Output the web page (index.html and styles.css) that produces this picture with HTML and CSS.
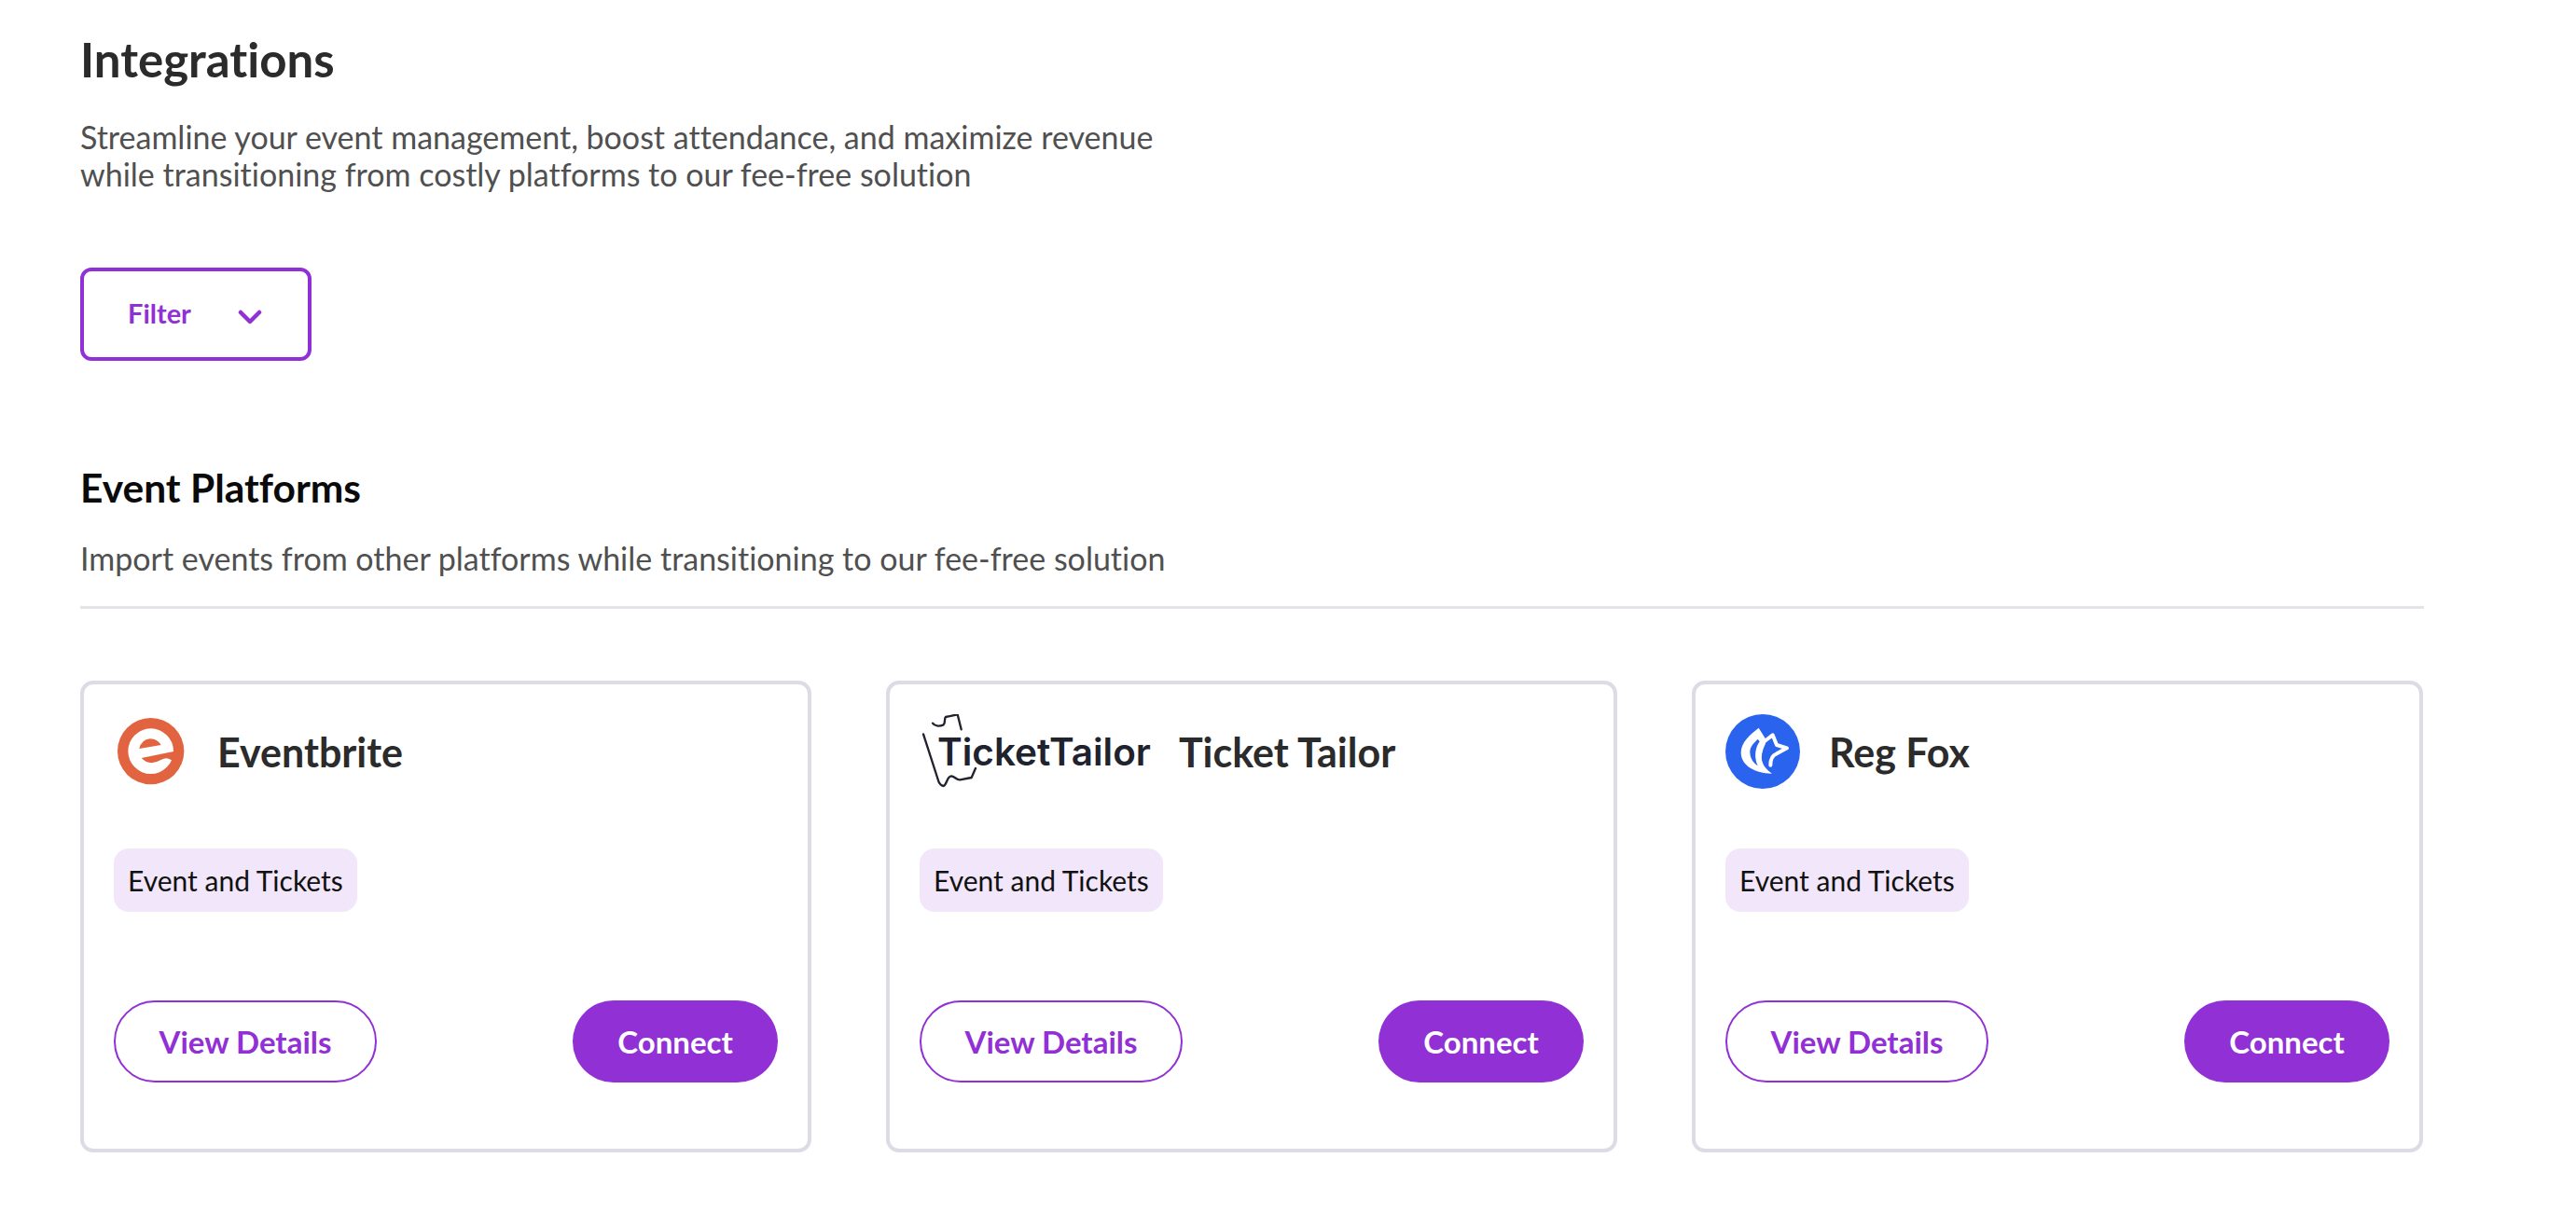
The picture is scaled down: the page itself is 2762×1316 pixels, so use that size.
FILE: index.html
```html
<!DOCTYPE html>
<html lang="en">
<head>
    <meta charset="UTF-8">
    <title>Integrations</title>
    <link rel="stylesheet" href="styles.css">
</head>
<body>
    <h1>Integrations</h1>
    <p class="intro">Streamline your event management, boost attendance, and maximize revenue<br>while transitioning from costly platforms to our fee-free solution</p>

    <button class="filter" type="button">
        <span>Filter</span>
        <svg width="26" height="16" viewBox="0 0 26 16"><path d="M3 3l10 10L23 3" fill="none" stroke="#9130d4" stroke-width="4.5" stroke-linecap="round" stroke-linejoin="round"/></svg>
    </button>

    <section class="platforms">
        <h2>Event Platforms</h2>
        <p class="section-sub">Import events from other platforms while transitioning to our fee-free solution</p>

        <div class="cards">
            <div class="card">
                <div class="card-head">
                    <svg class="logo" width="80" height="80" viewBox="0 0 240 240">
                        <circle cx="119" cy="119" r="107" fill="#e2633f"/>
                        <circle cx="119" cy="119" r="73" fill="#fff"/>
                        <path d="M82 111L152 99Q140 79 117 79Q88 82 82 111Z" fill="#e2633f"/>
                        <path d="M89 141L196 119L192 147L184 147Q170 136 150 148Q115 168 89 141Z" fill="#e2633f"/>
                    </svg>
                    <h3>Eventbrite</h3>
                </div>
                <span class="tag">Event and Tickets</span>
                <div class="actions">
                    <button class="btn btn-outline" type="button">View Details</button>
                    <button class="btn btn-solid" type="button">Connect</button>
                </div>
            </div>

            <div class="card">
                <div class="card-head">
                    <div class="tt-logo">
                        <svg class="tt-ticket" width="100" height="80" viewBox="0 0 300 240">
                            <path d="M42 29C48 38 62 40 77 34C84 28 78 14 84 9L122 1L134 49" fill="none" stroke="#20222e" stroke-width="7" stroke-linecap="round" stroke-linejoin="round"/>
                            <path d="M12 64L62 219Q68 230 77 231C88 226 88 200 102 199C112 199 118 212 130 211L167 204L180 174" fill="none" stroke="#20222e" stroke-width="7" stroke-linecap="round" stroke-linejoin="round"/>
                        </svg>
                        <span class="tt-name">TicketTailor</span>
                    </div>
                    <h3>Ticket Tailor</h3>
                </div>
                <span class="tag">Event and Tickets</span>
                <div class="actions">
                    <button class="btn btn-outline" type="button">View Details</button>
                    <button class="btn btn-solid" type="button">Connect</button>
                </div>
            </div>

            <div class="card">
                <div class="card-head">
                    <svg class="logo" width="80" height="80" viewBox="0 0 240 240">
                        <circle cx="120" cy="120" r="120" fill="#2a64ee"/>
                        <path fill-rule="evenodd" fill="#fff" d="M107 44C80 65 50 90 50 124C50 167 100 192 150 191C122 172 110 150 120 118C124 104 132 90 132 84ZM104 80C90 94 78 106 79 124C80 144 92 159 104 166C96 148 94 128 100 108C103 98 108 92 110 88Z"/>
                        <path d="M130 84L152 67L165 99L198 109L165 127C150 132 145 145 145 164" fill="none" stroke="#fff" stroke-width="12" stroke-linejoin="round" stroke-linecap="round"/>
                    </svg>
                    <h3>Reg Fox</h3>
                </div>
                <span class="tag">Event and Tickets</span>
                <div class="actions">
                    <button class="btn btn-outline" type="button">View Details</button>
                    <button class="btn btn-solid" type="button">Connect</button>
                </div>
            </div>
        </div>
    </section>
</body>
</html>
```

FILE: styles.css
```css
* {
    box-sizing: border-box;
}

body {
    font-family: Lato, "Open Sans", sans-serif;
    font-variant-ligatures: none;
    margin: 0;
    padding: 34px 163px 0 86px;
    background-color: #fff;
    color: #505050;
}

h1 {
    margin: 0;
    font-size: 51px;
    line-height: 60px;
    font-weight: 700;
    color: #2b2b2b;
}

.intro {
    margin: 33px 0 0;
    font-size: 34px;
    line-height: 40px;
}

.filter {
    display: flex;
    align-items: center;
    gap: 50px;
    width: 248px;
    height: 100px;
    margin-top: 80px;
    padding: 0 0 3px 47px;
    background: #fff;
    border: 4px solid #9130d4;
    border-radius: 12px;
    color: #9130d4;
    font: 700 29px Lato, sans-serif;
    font-variant-ligatures: none;
}

.filter svg {
    margin-top: 9px;
}

.platforms {
    margin-top: 112px;
}

h2 {
    margin: 0;
    font-size: 42.5px;
    line-height: 48px;
    font-weight: 700;
    color: #0a0a0a;
}

.section-sub {
    margin: 32px 0 0;
    padding-bottom: 31px;
    font-size: 34px;
    line-height: 40px;
    border-bottom: 3px solid #e2e4ea;
}

.cards {
    display: grid;
    grid-template-columns: repeat(3, 784px);
    column-gap: 80px;
    margin-top: 77px;
}

.card {
    height: 506px;
    padding: 32px 32px 0;
    border: 4px solid #dfdbe6;
    border-radius: 14px;
}

.card-head {
    display: flex;
    align-items: center;
    gap: 31px;
    height: 80px;
}

h3 {
    margin: 0;
    font-size: 43px;
    font-weight: 700;
    color: #2b2b2b;
}

.tt-logo {
    position: relative;
    display: flex;
    align-items: center;
    width: 247px;
    height: 80px;
    padding-left: 19px;
}

.tt-ticket {
    position: absolute;
    left: 0;
    top: 0;
}

.tt-name {
    position: relative;
    font-family: Inter, sans-serif;
    font-size: 40.5px;
    font-weight: 600;
    color: #20222e;
}

.tag {
    display: inline-block;
    height: 68px;
    margin-top: 64px;
    padding: 0 15px;
    background-color: #f2e6fa;
    border-radius: 16px;
    color: #111;
    font-size: 30px;
    line-height: 68px;
}

.actions {
    display: flex;
    justify-content: space-between;
    margin-top: 95px;
}

.btn {
    height: 88px;
    border-radius: 44px;
    font: 700 33px Lato, sans-serif;
    font-variant-ligatures: none;
}

.btn-outline {
    width: 282px;
    background: #fff;
    border: 2px solid #9130d4;
    color: #9130d4;
}

.btn-solid {
    width: 220px;
    background: #9130d4;
    border: none;
    color: #fff;
}
```
